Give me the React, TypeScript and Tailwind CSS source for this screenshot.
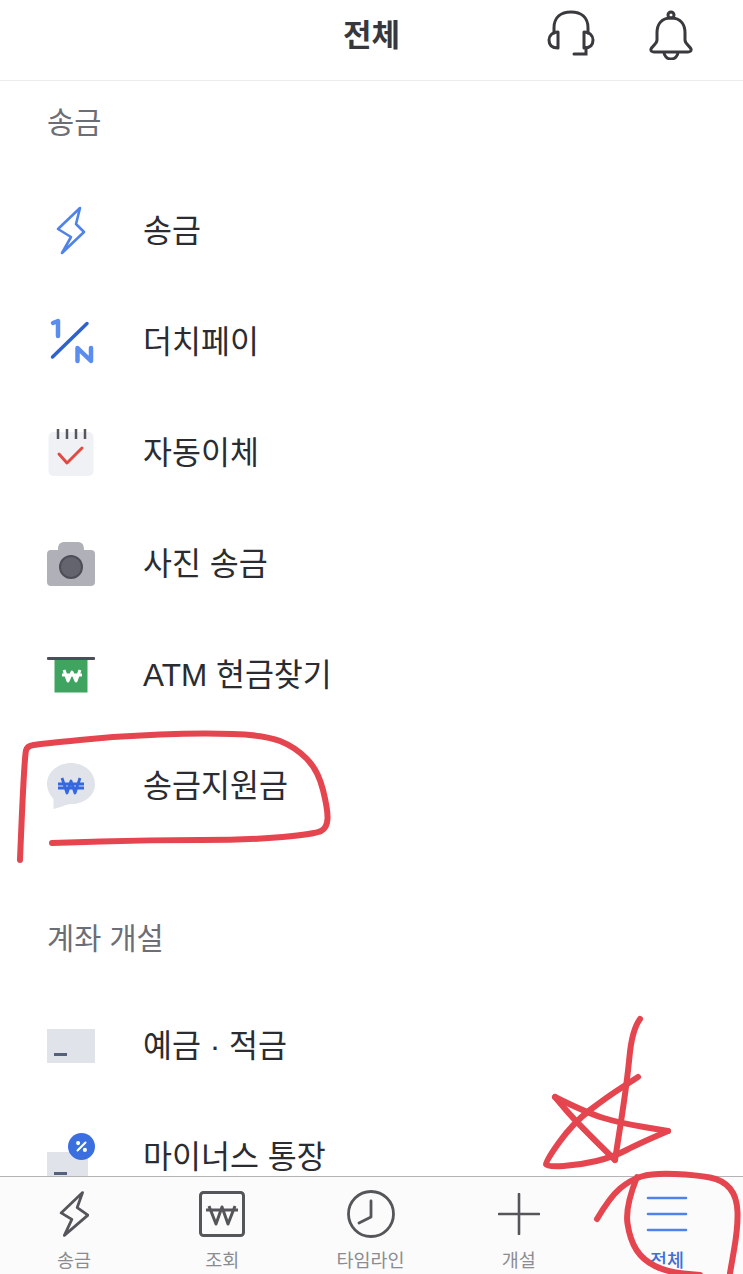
import { ReactNode } from 'react';

function BoltIcon() {
  return (
    <svg width="34" height="52" viewBox="0 0 34 52" fill="none">
      <path d="M26 3 L4 24 L17 32 L8 48 L30 27 L22 19 Z" stroke="#4f83ea" strokeWidth="2.600" strokeLinejoin="round" strokeLinecap="round" />
    </svg>
  );
}

function SplitIcon() {
  return (
    <svg width="48" height="48" viewBox="0 0 48 48" fill="none">
      <path d="M6 5 L11 3 V18" stroke="#5b8def" strokeWidth="4.500" strokeLinecap="round" strokeLinejoin="round" />
      <path d="M5.500 39 L40 5.500" stroke="#2f62cc" strokeWidth="3.500" strokeLinecap="round" />
      <path d="M30.500 43 V30 L44 43 V30" stroke="#5b8def" strokeWidth="4.500" strokeLinecap="round" strokeLinejoin="round" />
    </svg>
  );
}

function CalendarIcon() {
  return (
    <svg width="48" height="48" viewBox="0 0 48 48" fill="none">
      <rect x="1.500" y="3" width="45" height="44" rx="5" fill="#f0f1f5" />
      <path d="M11 0 V10 M20 0 V10 M29 0 V10 M38 0 V10" stroke="#55565e" strokeWidth="2.500" />
      <path d="M12 25 L20 34 L35 19" stroke="#df4b43" strokeWidth="3" strokeLinecap="round" strokeLinejoin="round" />
    </svg>
  );
}

function CameraIcon() {
  return (
    <svg width="48" height="46" viewBox="0 0 48 46" fill="none">
      <path d="M11 9 C11 3 13 1 18 1 H30 C35 1 37 3 37 9 H44 C46.500 9 48 10.500 48 13 V41 C48 43.500 46.500 45 44 45 H4 C1.500 45 0 43.500 0 41 V13 C0 10.500 1.500 9 4 9 Z" fill="#b0b1b8" />
      <circle cx="24" cy="26" r="11" fill="#63646e" stroke="#4d4e57" strokeWidth="2" />
    </svg>
  );
}

function AtmIcon() {
  return (
    <svg width="48" height="36" viewBox="0 0 48 36" fill="none">
      <rect x="7.500" y="2" width="33" height="33.500" fill="#3fa45f" />
      <rect x="0" y="0" width="48" height="3" rx="1" fill="#44505f" />
      <path d="M17 13 L21 24 L25 15 L29 24 L33 13 M15 18 H35" stroke="#ffffff" strokeWidth="3" strokeLinejoin="round" />
    </svg>
  );
}

function BubbleIcon() {
  return (
    <svg width="48" height="46" viewBox="0 0 48 46" fill="none">
      <path d="M24 0 C37 0 48 9 48 21 C48 33 37 41 24 41 C20 41 12 45 6.500 46 L6.500 36 C3 32 0 27 0 21 C0 9 11 0 24 0 Z" fill="#e1e3ea" />
      <path d="M15 15 L20 30 L24 18 L28 30 L33 15 M11 21 H37 M11 25 H37" stroke="#3568e0" strokeWidth="2.800" strokeLinejoin="round" />
    </svg>
  );
}

function BookIcon() {
  return (
    <div className="flex h-[34px] w-12 items-end bg-[#e1e3ea] pb-[7px] pl-[7px]">
      <div className="h-[2.5px] w-[13px] bg-[#55607a]" />
    </div>
  );
}

function MinusBookIcon() {
  return (
    <div className="relative flex h-[34px] w-12 items-start">
      <div className="mt-[12px] flex h-[35px] w-[41px] shrink-0 items-end bg-[#e1e3ea] pb-[12px] pl-[7px]">
        <div className="h-[2.5px] w-[13px] bg-[#55607a]" />
      </div>
      <div className="absolute left-[21px] top-[-7px] flex h-[27px] w-[27px] items-center justify-center rounded-full bg-[#3b6fe0]">
        <svg width="17" height="17" viewBox="0 0 15 15" fill="none">
          <path d="M4 11 L11 4" stroke="#fff" strokeWidth="1.800" strokeLinecap="round" />
          <circle cx="4.500" cy="4.500" r="1.800" fill="#fff" />
          <circle cx="10.500" cy="10.500" r="1.800" fill="#fff" />
        </svg>
      </div>
    </div>
  );
}

function MenuRow({ icon, label }: { icon: ReactNode; label: string }) {
  return (
    <div className="flex h-[111px] shrink-0 items-center">
      <div className="flex w-12 shrink-0 items-center justify-center">{icon}</div>
      <span className="ml-12 mt-[2px] text-[31.5px] leading-none text-[#2b2c31]">{label}</span>
    </div>
  );
}

function NavItem({ icon, label, active }: { icon: ReactNode; label: string; active?: boolean }) {
  return (
    <div className="flex flex-1 flex-col items-center">
      <div className="flex h-[50px] items-center justify-center">{icon}</div>
      <span className={`mt-[10px] text-[18.500px] leading-[24px] ${active ? 'font-medium text-[#3f6fd8]' : 'text-[#8b8c92]'}`}>{label}</span>
    </div>
  );
}

// hand drawn strokes: runs a soft curve through the sampled points
function smooth(pts: number[][]) {
  let d = `M${pts[0][0]} ${pts[0][1]}`;
  for (let i = 1; i < pts.length - 1; i++) {
    const mx = (pts[i][0] + pts[i + 1][0]) / 2;
    const my = (pts[i][1] + pts[i + 1][1]) / 2;
    d += ` Q${pts[i][0]} ${pts[i][1]} ${mx} ${my}`;
  }
  const last = pts[pts.length - 1];
  return d + ` L${last[0]} ${last[1]}`;
}

const MARKS = [
  [[20, 860], [22, 810], [25, 755], [27, 746], [40, 744], [120, 736], [200, 733], [265, 735], [295, 747], [318, 770], [328, 810], [327, 828], [315, 834], [250, 840], [150, 840], [52, 843]],
  [[640, 1019], [632, 1030], [627, 1083], [615, 1160]],
  [[615, 1160], [577, 1123], [555, 1097]],
  [[555, 1097], [587, 1113], [620, 1123], [668, 1131]],
  [[668, 1131], [640, 1143], [613, 1157], [580, 1165], [547, 1167], [545, 1162], [573, 1123], [607, 1097], [638, 1077]],
  [[597, 1219], [610, 1197], [630, 1180], [653, 1173], [697, 1175], [723, 1180], [737, 1197], [738, 1227], [730, 1273]],
  [[637, 1177], [625, 1207], [630, 1240], [643, 1260], [667, 1272], [700, 1275]],
];

export default function App() {
  return (
    <div className="relative flex h-[1274px] w-[743px] flex-col overflow-hidden bg-white font-['Liberation_Sans','Noto_Sans_CJK_KR',sans-serif]">
      {/* Header */}
      <div className="relative flex h-[81px] shrink-0 items-center justify-center border-b border-[#ececee] pb-[10px]">
        <h1 className="text-[31px] font-bold leading-none text-[#37383d]">전체</h1>
        <div className="absolute right-[50px] top-[9px] flex items-center gap-[52px]">
          <svg width="50" height="52" viewBox="0 0 50 52" fill="none" stroke="#3a3a3e" strokeWidth="3">
            <path d="M7 24 V19 C7 8 14 3 24 3 C34 3 41 8 41 19 V24" strokeLinecap="round" />
            <path d="M11 23 C5 23 2 27 2 31 C2 36 5 39 11 39 Z" strokeLinejoin="round" />
            <path d="M37 23 C43 23 46 27 46 31 C46 36 43 39 37 39 Z" strokeLinejoin="round" />
            <path d="M39 39 V45 H27" strokeLinecap="round" />
          </svg>
          <svg width="44" height="50" viewBox="0 0 44 50" fill="none" stroke="#3a3a3e" strokeWidth="3" strokeLinejoin="round">
            <circle cx="22" cy="5" r="3" />
            <path d="M22 8 C12 8 8 15 8 23 V30 C8 34 3 36 2 39 C1.500 41 3 42 5 42 H39 C41 42 42.500 41 42 39 C41 36 36 34 36 30 V23 C36 15 32 8 22 8 Z" />
            <path d="M15 42 C15 46 18 49 22 49 C26 49 29 46 29 42" />
          </svg>
        </div>
      </div>

      {/* Menu list */}
      <div className="flex min-h-0 flex-1 flex-col overflow-hidden px-[47px]">
        <p className="mt-[22px] shrink-0 text-[29.500px] leading-[40px] text-[#6c6e76]">송금</p>
        <div className="mt-[32px] flex shrink-0 flex-col">
          <MenuRow icon={<BoltIcon />} label="송금" />
          <MenuRow icon={<SplitIcon />} label="더치페이" />
          <MenuRow icon={<CalendarIcon />} label="자동이체" />
          <MenuRow icon={<CameraIcon />} label="사진 송금" />
          <MenuRow icon={<AtmIcon />} label="ATM 현금찾기" />
          <MenuRow icon={<BubbleIcon />} label="송금지원금" />
        </div>
        <p className="mt-[78px] shrink-0 text-[29.500px] leading-[40px] text-[#6c6e76]">계좌 개설</p>
        <div className="mt-[31px] flex shrink-0 flex-col">
          <MenuRow icon={<BookIcon />} label="예금 · 적금" />
          <MenuRow icon={<MinusBookIcon />} label="마이너스 통장" />
        </div>
      </div>

      {/* Bottom nav */}
      <div className="relative z-10 flex h-[98px] shrink-0 items-start border-t border-[#b4b4b6] bg-[#fbfbfb] pr-[2px] pt-[12px]">
        <NavItem
          label="송금"
          icon={
            <svg width="30" height="48" viewBox="0 0 28 44" fill="none">
              <path d="M22 2 L2 21 L12 27 L5 42 L27 23 L17 16 Z" stroke="#55565a" strokeWidth="2.600" strokeLinejoin="round" strokeLinecap="round" />
            </svg>
          }
        />
        <NavItem
          label="조회"
          icon={
            <svg width="46" height="46" viewBox="0 0 46 46" fill="none" stroke="#55565a">
              <rect x="1.500" y="1.500" width="43" height="43" rx="3" strokeWidth="3" />
              <path d="M10 15 L17 33 L23 16 L29 33 L36 15 M7 19 H39" strokeWidth="3" strokeLinejoin="round" />
            </svg>
          }
        />
        <NavItem
          label="타임라인"
          icon={
            <svg width="48" height="48" viewBox="0 0 48 48" fill="none" stroke="#55565a" strokeWidth="2.800" strokeLinecap="round" strokeLinejoin="round">
              <circle cx="24" cy="24" r="22.500" />
              <path d="M24 11 V27 L12 33" />
            </svg>
          }
        />
        <NavItem
          label="개설"
          icon={
            <svg width="42" height="42" viewBox="0 0 42 42" fill="none" stroke="#55565a" strokeWidth="2.600" strokeLinecap="round">
              <path d="M21 1 V41 M1 21 H41" />
            </svg>
          }
        />
        <NavItem
          label="전체"
          active
          icon={
            <svg width="42" height="36" viewBox="0 0 42 36" fill="none" stroke="#4f83ea" strokeWidth="2.600" strokeLinecap="round">
              <path d="M2 2 H40 M2 18 H40 M2 34 H40" />
            </svg>
          }
        />
      </div>

      {/* Red pen marks over the screenshot */}
      <svg className="pointer-events-none absolute left-0 top-0 z-20" width="743" height="1274" viewBox="0 0 743 1274" fill="none" stroke="#e5454f" strokeWidth="6" strokeLinecap="round" strokeLinejoin="round">
        {MARKS.map((pts, i) => (
          <path key={i} d={smooth(pts)} />
        ))}
      </svg>
    </div>
  );
}
